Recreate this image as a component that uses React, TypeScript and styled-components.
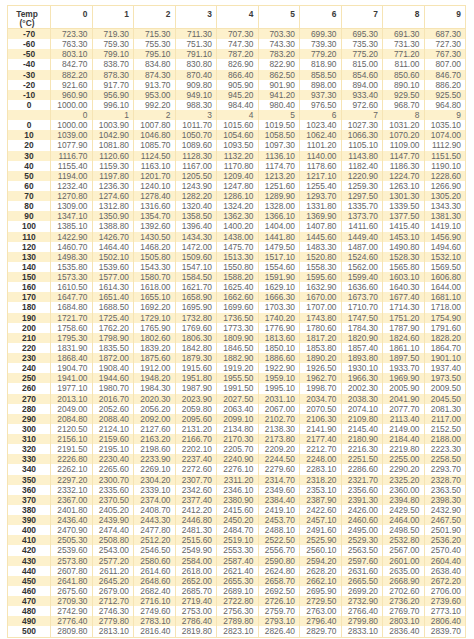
import styled, { createGlobalStyle } from 'styled-components';

const GlobalStyle = createGlobalStyle`
  body {
    margin: 5px 8px 0 7px;
    background: #ffffff;
    font-family: "Liberation Sans", Arial, sans-serif;
  }
`;

const Table = styled.table`
  width: 100%;
  border-collapse: collapse;
  table-layout: fixed;
  font-size: 8.4px;
  border: 1px solid #f6e4b4;
`;

const HeadCell = styled.th<{ $first?: boolean }>`
  width: ${(p) => (p.$first ? '38px' : 'auto')};
  height: 18px;
  padding: 4px 4px 0 0;
  vertical-align: top;
  text-align: ${(p) => (p.$first ? 'center' : 'right')};
  font-weight: bold;
  line-height: 8.5px;
  color: #3a3a3a;
  border: 1px solid #f6e4b4;
`;

const Row = styled.tr<{ $shaded: boolean }>`
  background-color: ${(p) => (p.$shaded ? '#fdf1cc' : '#ffffff')};
`;

const TempCell = styled.td`
  padding: 0;
  line-height: 10.12px;
  height: 10.12px;
  text-align: center;
  font-weight: bold;
  color: #333333;
  border-left: 1px solid #f6e4b4;
  border-right: 1px solid #f6e4b4;
`;

const ValueCell = styled.td`
  padding: 0 4px 0 0;
  line-height: 10.12px;
  height: 10.12px;
  text-align: right;
  color: #666666;
  border-left: 1px solid #f6e4b4;
  border-right: 1px solid #f6e4b4;
`;

const cols = ['0', '1', '2', '3', '4', '5', '6', '7', '8', '9'];

const negative: [string, string][] = [
  ['-70', '723.30 719.30 715.30 711.30 707.30 703.30 699.30 695.30 691.30 687.30'],
  ['-60', '763.30 759.30 755.30 751.30 747.30 743.30 739.30 735.30 731.30 727.30'],
  ['-50', '803.10 799.10 795.10 791.10 787.20 783.20 779.20 775.20 771.20 767.30'],
  ['-40', '842.70 838.70 834.80 830.80 826.90 822.90 818.90 815.00 811.00 807.00'],
  ['-30', '882.20 878.30 874.30 870.40 866.40 862.50 858.50 854.60 850.60 846.70'],
  ['-20', '921.60 917.70 913.70 909.80 905.90 901.90 898.00 894.00 890.10 886.20'],
  ['-10', '960.90 956.90 953.00 949.10 945.20 941.20 937.30 933.40 929.50 925.50'],
  ['0', '1000.00 996.10 992.20 988.30 984.40 980.40 976.50 972.60 968.70 964.80'],
];

const positive: [string, string][] = [
  ['0', '1000.00 1003.90 1007.80 1011.70 1015.60 1019.50 1023.40 1027.30 1031.20 1035.10'],
  ['10', '1039.00 1042.90 1046.80 1050.70 1054.60 1058.50 1062.40 1066.30 1070.20 1074.00'],
  ['20', '1077.90 1081.80 1085.70 1089.60 1093.50 1097.30 1101.20 1105.10 1109.00 1112.90'],
  ['30', '1116.70 1120.60 1124.50 1128.30 1132.20 1136.10 1140.00 1143.80 1147.70 1151.50'],
  ['40', '1155.40 1159.30 1163.10 1167.00 1170.80 1174.70 1178.60 1182.40 1186.30 1190.10'],
  ['50', '1194.00 1197.80 1201.70 1205.50 1209.40 1213.20 1217.10 1220.90 1224.70 1228.60'],
  ['60', '1232.40 1236.30 1240.10 1243.90 1247.80 1251.60 1255.40 1259.30 1263.10 1266.90'],
  ['70', '1270.80 1274.60 1278.40 1282.20 1286.10 1289.90 1293.70 1297.50 1301.30 1305.20'],
  ['80', '1309.00 1312.80 1316.60 1320.40 1324.20 1328.00 1331.80 1335.70 1339.50 1343.30'],
  ['90', '1347.10 1350.90 1354.70 1358.50 1362.30 1366.10 1369.90 1373.70 1377.50 1381.30'],
  ['100', '1385.10 1388.80 1392.60 1396.40 1400.20 1404.00 1407.80 1411.60 1415.40 1419.10'],
  ['110', '1422.90 1426.70 1430.50 1434.30 1438.00 1441.80 1445.60 1449.40 1453.10 1456.90'],
  ['120', '1460.70 1464.40 1468.20 1472.00 1475.70 1479.50 1483.30 1487.00 1490.80 1494.60'],
  ['130', '1498.30 1502.10 1505.80 1509.60 1513.30 1517.10 1520.80 1524.60 1528.30 1532.10'],
  ['140', '1535.80 1539.60 1543.30 1547.10 1550.80 1554.60 1558.30 1562.00 1565.80 1569.50'],
  ['150', '1573.30 1577.00 1580.70 1584.50 1588.20 1591.90 1595.60 1599.40 1603.10 1606.80'],
  ['160', '1610.50 1614.30 1618.00 1621.70 1625.40 1629.10 1632.90 1636.60 1640.30 1644.00'],
  ['170', '1647.70 1651.40 1655.10 1658.90 1662.60 1666.30 1670.00 1673.70 1677.40 1681.10'],
  ['180', '1684.80 1688.50 1692.20 1695.90 1699.60 1703.30 1707.00 1710.70 1714.30 1718.00'],
  ['190', '1721.70 1725.40 1729.10 1732.80 1736.50 1740.20 1743.80 1747.50 1751.20 1754.90'],
  ['200', '1758.60 1762.20 1765.90 1769.60 1773.30 1776.90 1780.60 1784.30 1787.90 1791.60'],
  ['210', '1795.30 1798.90 1802.60 1806.30 1809.90 1813.60 1817.20 1820.90 1824.60 1828.20'],
  ['220', '1831.90 1835.50 1839.20 1842.80 1846.50 1850.10 1853.80 1857.40 1861.10 1864.70'],
  ['230', '1868.40 1872.00 1875.60 1879.30 1882.90 1886.60 1890.20 1893.80 1897.50 1901.10'],
  ['240', '1904.70 1908.40 1912.00 1915.60 1919.20 1922.90 1926.50 1930.10 1933.70 1937.40'],
  ['250', '1941.00 1944.60 1948.20 1951.80 1955.50 1959.10 1962.70 1966.30 1969.90 1973.50'],
  ['260', '1977.10 1980.70 1984.30 1987.90 1991.50 1995.10 1998.70 2002.30 2005.90 2009.50'],
  ['270', '2013.10 2016.70 2020.30 2023.90 2027.50 2031.10 2034.70 2038.30 2041.90 2045.50'],
  ['280', '2049.00 2052.60 2056.20 2059.80 2063.40 2067.00 2070.50 2074.10 2077.70 2081.30'],
  ['290', '2084.80 2088.40 2092.00 2095.60 2099.10 2102.70 2106.30 2109.80 2113.40 2117.00'],
  ['300', '2120.50 2124.10 2127.60 2131.20 2134.80 2138.30 2141.90 2145.40 2149.00 2152.50'],
  ['310', '2156.10 2159.60 2163.20 2166.70 2170.30 2173.80 2177.40 2180.90 2184.40 2188.00'],
  ['320', '2191.50 2195.10 2198.60 2202.10 2205.70 2209.20 2212.70 2216.30 2219.80 2223.30'],
  ['330', '2226.80 2230.40 2233.90 2237.40 2240.90 2244.50 2248.00 2251.50 2255.00 2258.50'],
  ['340', '2262.10 2265.60 2269.10 2272.60 2276.10 2279.60 2283.10 2286.60 2290.20 2293.70'],
  ['350', '2297.20 2300.70 2304.20 2307.70 2311.20 2314.70 2318.20 2321.70 2325.20 2328.70'],
  ['360', '2332.10 2335.60 2339.10 2342.60 2346.10 2349.60 2353.10 2356.60 2360.00 2363.50'],
  ['370', '2367.00 2370.50 2374.00 2377.40 2380.90 2384.40 2387.90 2391.30 2394.80 2398.30'],
  ['380', '2401.80 2405.20 2408.70 2412.20 2415.60 2419.10 2422.60 2426.00 2429.50 2432.90'],
  ['390', '2436.40 2439.90 2443.30 2446.80 2450.20 2453.70 2457.10 2460.60 2464.00 2467.50'],
  ['400', '2470.90 2474.40 2477.80 2481.30 2484.70 2488.10 2491.60 2495.00 2498.50 2501.90'],
  ['410', '2505.30 2508.80 2512.20 2515.60 2519.10 2522.50 2525.90 2529.30 2532.80 2536.20'],
  ['420', '2539.60 2543.00 2546.50 2549.90 2553.30 2556.70 2560.10 2563.50 2567.00 2570.40'],
  ['430', '2573.80 2577.20 2580.60 2584.00 2587.40 2590.80 2594.20 2597.60 2601.00 2604.40'],
  ['440', '2607.80 2611.20 2614.60 2618.00 2621.40 2624.80 2628.20 2631.60 2635.00 2638.40'],
  ['450', '2641.80 2645.20 2648.60 2652.00 2655.30 2658.70 2662.10 2665.50 2668.90 2672.20'],
  ['460', '2675.60 2679.00 2682.40 2685.70 2689.10 2692.50 2695.90 2699.20 2702.60 2706.00'],
  ['470', '2709.30 2712.70 2716.10 2719.40 2722.80 2726.10 2729.50 2732.90 2736.20 2739.60'],
  ['480', '2742.90 2746.30 2749.60 2753.00 2756.30 2759.70 2763.00 2766.40 2769.70 2773.10'],
  ['490', '2776.40 2779.80 2783.10 2786.40 2789.80 2793.10 2796.40 2799.80 2803.10 2806.40'],
  ['500', '2809.80 2813.10 2816.40 2819.80 2823.10 2826.40 2829.70 2833.10 2836.40 2839.70'],
];

// body rows: negative block, a repeated column index row, then the positive block
type BodyRow = { temp: string; values: string[] };

const bodyRows: BodyRow[] = [
  ...negative.map(([temp, v]) => ({ temp, values: v.split(' ') })),
  { temp: '', values: cols },
  ...positive.map(([temp, v]) => ({ temp, values: v.split(' ') })),
];

const App = () => {
  return (
    <>
      <GlobalStyle />
      <Table>
        <thead>
          <tr>
            <HeadCell $first>
              Temp
              <br />
              (°C)
            </HeadCell>
            {cols.map((c) => (
              <HeadCell key={c}>{c}</HeadCell>
            ))}
          </tr>
        </thead>
        <tbody>
          {bodyRows.map((row, i) => (
            <Row key={i} $shaded={i % 2 === 0}>
              <TempCell>{row.temp}</TempCell>
              {row.values.map((v, j) => (
                <ValueCell key={j}>{v}</ValueCell>
              ))}
            </Row>
          ))}
        </tbody>
      </Table>
    </>
  );
};

export default App;
